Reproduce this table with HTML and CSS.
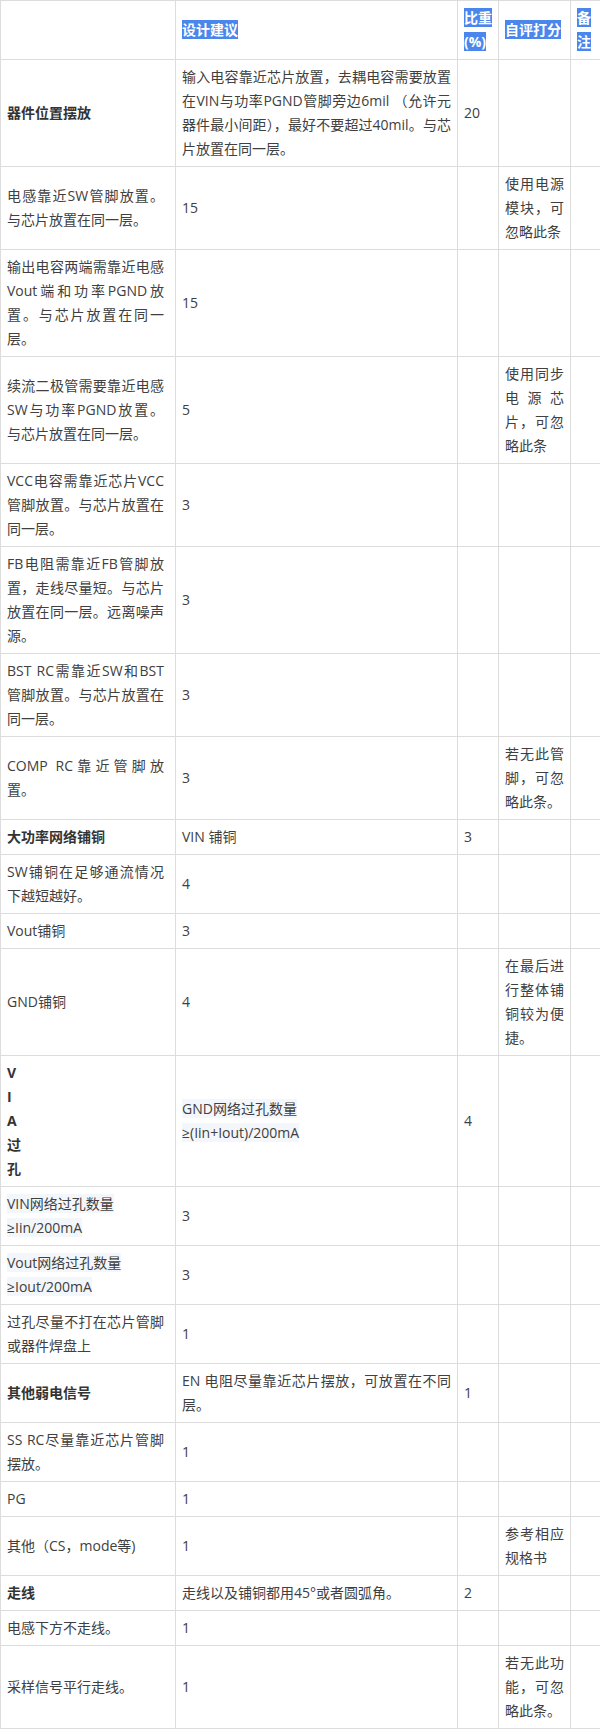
FILE: index.html
```html
<!DOCTYPE html>
<html lang="zh-CN">
<head>
<meta charset="utf-8">
<title>PCB布局自评表</title>
<link rel="stylesheet" href="styles.css">
</head>
<body>
<table class="sheet">
  <colgroup>
    <col class="c1"><col class="c2"><col class="c3"><col class="c4"><col class="c5">
  </colgroup>
  <tbody>
    <tr class="head">
      <td></td>
      <td><span class="sel">设计建议</span></td>
      <td><span class="sel">比重(%)</span></td>
      <td><span class="sel">自评打分</span></td>
      <td><span class="sel">备注</span></td>
    </tr>
    <tr>
      <td class="label">器件位置摆放</td>
      <td>输入电容靠近芯片放置，去耦电容需要放置在VIN与功率PGND管脚旁边6mil （允许元器件最小间距），最好不要超过40mil。与芯片放置在同一层。</td>
      <td>20</td><td></td><td></td>
    </tr>
    <tr>
      <td>电感靠近SW管脚放置。与芯片放置在同一层。</td>
      <td>15</td><td></td><td>使用电源模块，可忽略此条</td><td></td>
    </tr>
    <tr>
      <td>输出电容两端需靠近电感Vout端和功率PGND放置。与芯片放置在同一层。</td>
      <td>15</td><td></td><td></td><td></td>
    </tr>
    <tr>
      <td>续流二极管需要靠近电感SW与功率PGND放置。与芯片放置在同一层。</td>
      <td>5</td><td></td><td>使用同步电源芯片，可忽略此条</td><td></td>
    </tr>
    <tr>
      <td>VCC电容需靠近芯片VCC管脚放置。与芯片放置在同一层。</td>
      <td>3</td><td></td><td></td><td></td>
    </tr>
    <tr>
      <td>FB电阻需靠近FB管脚放置，走线尽量短。与芯片放置在同一层。远离噪声源。</td>
      <td>3</td><td></td><td></td><td></td>
    </tr>
    <tr>
      <td>BST RC需靠近SW和BST管脚放置。与芯片放置在同一层。</td>
      <td>3</td><td></td><td></td><td></td>
    </tr>
    <tr>
      <td>COMP RC靠近管脚放置。</td>
      <td>3</td><td></td><td>若无此管脚，可忽略此条。</td><td></td>
    </tr>
    <tr>
      <td class="label">大功率网络铺铜</td>
      <td>VIN 铺铜</td><td>3</td><td></td><td></td>
    </tr>
    <tr>
      <td>SW铺铜在足够通流情况下越短越好。</td>
      <td>4</td><td></td><td></td><td></td>
    </tr>
    <tr>
      <td>Vout铺铜</td>
      <td>3</td><td></td><td></td><td></td>
    </tr>
    <tr>
      <td>GND铺铜</td>
      <td>4</td><td></td><td>在最后进行整体铺铜较为便捷。</td><td></td>
    </tr>
    <tr>
      <td class="label">V<br>I<br>A<br>过<br>孔</td>
      <td><span class="mark">GND网络过孔数量</span><br><span class="mark">≥(Iin+Iout)/200mA</span></td>
      <td>4</td><td></td><td></td>
    </tr>
    <tr>
      <td><span class="mark">VIN网络过孔数量</span><br><span class="mark">≥Iin/200mA</span></td>
      <td>3</td><td></td><td></td><td></td>
    </tr>
    <tr>
      <td><span class="mark">Vout网络过孔数量</span><br><span class="mark">≥Iout/200mA</span></td>
      <td>3</td><td></td><td></td><td></td>
    </tr>
    <tr>
      <td>过孔尽量不打在芯片管脚或器件焊盘上</td>
      <td>1</td><td></td><td></td><td></td>
    </tr>
    <tr>
      <td class="label">其他弱电信号</td>
      <td>EN 电阻尽量靠近芯片摆放，可放置在不同层。</td>
      <td>1</td><td></td><td></td>
    </tr>
    <tr>
      <td>SS RC尽量靠近芯片管脚摆放。</td>
      <td>1</td><td></td><td></td><td></td>
    </tr>
    <tr>
      <td>PG</td>
      <td>1</td><td></td><td></td><td></td>
    </tr>
    <tr>
      <td>其他（CS，mode等)</td>
      <td>1</td><td></td><td>参考相应规格书</td><td></td>
    </tr>
    <tr>
      <td class="label">走线</td>
      <td>走线以及铺铜都用45°或者圆弧角。</td>
      <td>2</td><td></td><td></td>
    </tr>
    <tr>
      <td>电感下方不走线。</td>
      <td>1</td><td></td><td></td><td></td>
    </tr>
    <tr>
      <td>采样信号平行走线。</td>
      <td>1</td><td></td><td>若无此功能，可忽略此条。</td><td></td>
    </tr>
  </tbody>
</table>
</body>
</html>
```

FILE: styles.css
```css
html, body {
  margin: 0;
  padding: 0;
  background: #ffffff;
}

body {
  font-family: "Open Sans", "Noto Sans", "Noto Sans CJK SC", sans-serif;
  font-size: 14px;
  line-height: 24px;
  color: #404040;
}

.sheet {
  width: 600px;
  table-layout: fixed;
  border-collapse: collapse;
}

.c1 { width: 175px; }
.c2 { width: 282px; }
.c3 { width: 41px; }
.c4 { width: 72px; }
.c5 { width: 30px; }

.sheet td {
  border: 1px solid #dcdcdc;
  padding: 5px 6px;
  vertical-align: middle;
  text-align: justify;
  word-break: normal;
  overflow-wrap: break-word;
}

.sheet td:first-child {
  padding-right: 11px;
}

.head td {
  text-align: left;
}

.sel {
  background: #4a86ec;
  color: #ffffff;
  font-weight: bold;
}

.label {
  font-weight: bold;
  color: #333333;
}

.mark {
  background: #f3f6fa;
}
```
